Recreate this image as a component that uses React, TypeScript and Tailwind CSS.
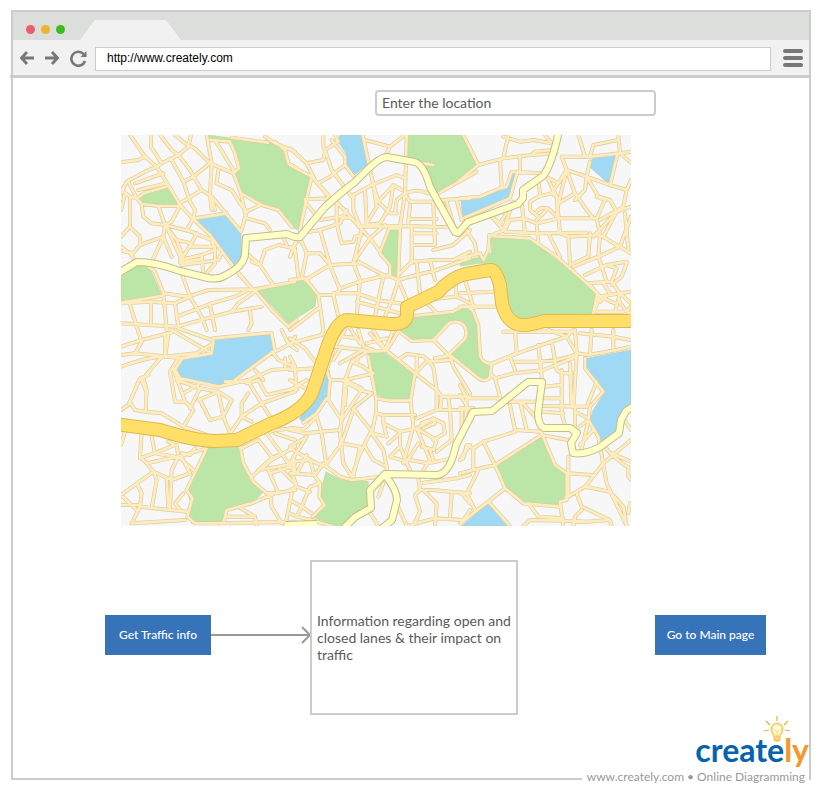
import React from "react";

type Tile = { x: number; y: number; roads: string; green: string; water: string };

// The city is drawn as tiles; each tile uses three units for one pixel.
const tiles: Tile[] = [
  {
    x: -6,
    y: -5,
    green:
      "M280,15L350,25L470,35L500,55L515,100L545,120L585,145L575,190L560,240L550,300L525,290L490,240L430,220L378,185L360,130L375,115L355,40L285,30Z M68,205L90,190L155,172L192,228L80,222Z M18,440L60,403L85,405L110,425L140,498L18,518Z M428,482L565,450L605,495L600,530L520,580Z",
    water: "M245,268L335,253L378,305L380,380L355,408L285,310Z",
    roads:
      "M45,15L90,80L125,110L160,165L195,225L235,268L285,315L355,410L410,475 M18,97L70,90L90,80 M108,15L108,50L140,100L190,75L220,50L228,15 M125,110L140,100 M135,15L170,60L190,75L225,120L260,180L290,200L335,253L378,305 M180,15L210,40L240,55L285,100L355,130 M275,15L290,100L285,195L290,240 M285,30L345,35L360,70L372,115L355,130 M300,30L355,120 M285,100L235,140L205,155 M170,90L205,155L225,215L240,240L235,268 M125,110L90,125L35,155L18,190 M60,160L145,130 M40,155L65,205 M70,180L155,160 M18,180L45,200L65,205L80,222L130,228L195,228 M65,205L90,188L155,170 M45,205L45,290L18,320 M45,290L75,320L75,345L50,375L18,350 M50,375L60,395 M18,363L50,368 M75,345L145,320L150,285 M80,225L85,260L110,280L150,285L210,300L245,310 M130,228L150,285 M195,228L170,275L150,285L185,330L230,340L245,310 M145,320L170,380 M145,320L115,385 M185,330L205,385 M155,290L200,390 M230,340L200,385 M215,300L235,265 M195,220L260,180 M310,120L305,160L350,180L375,220L395,245L380,300 M395,245L435,225 M355,130L378,190L440,225L490,240L530,290 M378,190L390,250 M395,265L450,280L465,300 M240,265L335,250 M290,200L300,240 M195,390L260,375L300,360L290,330L240,310 M200,405L310,390L320,370 M195,398L255,388 M260,380L265,430 M300,350L300,400L275,430 M230,350L290,350 M95,405L120,425L145,490L220,500L280,480L420,478L540,455 M200,430L225,500L260,560L275,600 M145,490L155,600 M108,520L108,580 M18,520L105,515L180,520L225,500 M45,525L65,590 M18,580L185,590L350,545L440,530 M180,520L190,590 M185,560L290,520L360,500L400,480 M350,545L370,520L420,485 M420,480L470,540L520,590 M405,545L410,580L400,600 M285,525L300,600 M18,518L140,498 M410,395L435,405L450,360L490,345L540,355 M435,405L475,465 M370,430L410,475 M395,370L435,405 M450,20L480,40L540,65 M350,23L460,38 M480,35L510,60L520,100L545,115 M515,345L500,310 M18,240L30,190L18,175 M520,590L545,570",
  },
  {
    x: 169,
    y: -5,
    green:
      "M355,15L520,15L562,105L510,145L440,188L400,100L352,80Z M300,295L328,295L318,440L300,438L298,400L275,365Z",
    water: "M150,15L218,15L235,100L190,138L162,112L168,70L145,35Z",
    roads:
      "M0,55L50,100L75,150L115,195 M100,15L100,50L105,60L100,90L50,100 M135,15L145,35L105,60L125,120L185,200 M125,30L165,80L165,105L120,140L85,160 M165,105L190,138 M218,15L250,165L265,215L300,250L320,250 M225,30L300,50L345,15 M300,50L290,70 M350,15L345,190L330,290 M0,105L65,140L50,205L30,300 M65,140L120,205L45,208 M45,215L90,270 M245,165L320,135L345,145 M190,195L245,165 M190,195L190,240L215,300L190,400 M265,215L310,165L335,180 M310,165L300,230L270,280L230,285 M225,180L230,285 M250,165L260,230L230,280 M345,190Q380,175 415,190 M345,190L360,215L425,215 M315,250L320,210L345,190 M360,225L355,280 M355,267L440,267 M205,290L350,288L490,292 M365,288L365,400 M430,220L435,345 M365,310L440,310 M370,345L430,345 M430,360L490,345L540,300 M140,215L185,265L240,325 M270,370L300,405L300,435 M205,395L290,440 M210,400L120,405 M240,325L270,365 M195,390L240,325L285,285 M300,290L270,365 M330,290L325,440 M140,215L140,280L155,340L190,335L195,320L215,315 M90,270L150,260L185,265 M90,300L150,280L170,240 M30,310L90,300L120,405 M20,330L0,380 M15,360L25,440 M20,330L35,335L50,370L35,445 M50,370L90,370L120,405L45,450 M0,450L45,445L85,495L100,600 M120,405L150,480L130,495L85,495 M190,400L210,450L200,560 M150,475L210,455L290,435L325,450L380,435L440,420L540,385 M130,495L145,560 M130,490L200,490L260,510L330,520 M200,515L330,550 M280,440L265,510L255,560 M325,450L310,500L285,560 M325,450L350,510 M325,435L365,395L430,390L490,390L540,365 M380,400L390,490 M420,390L435,450 M0,600L85,535 M370,558L490,545L520,528 M495,450L500,500L540,520 M410,510L495,500 M410,520L440,548 M300,295L328,295 M445,190L560,125 M455,210L540,205 M470,215L495,300 M500,210L515,270 M455,215L480,260 M400,100L430,105",
  },
  {
    x: 339,
    y: -5,
    green:
      "M92,318L210,328L375,455L412,490L400,552L240,555L180,568L150,565L140,470L110,405L60,400L0,408L0,395L60,380L75,385L95,365Z",
    water:
      "M3,208L80,195L120,180L145,165L155,125L172,122L150,205L80,235L8,265Z M390,95L400,83L472,72L450,165L388,110Z",
    roads:
      "M10,15L55,105L0,150 M55,105L130,85L215,75L290,70 M145,15L130,85 M130,20L180,35L220,30L275,40L255,15 M215,75L225,65L280,60 M120,90L125,175L140,170L155,125L240,130 M180,85L180,130 M0,205L60,200L120,175 M172,125L150,205L80,235L10,265 M240,130L295,160L320,120L305,80L390,80L480,70L513,65 M355,15L375,80 M390,80L400,45L475,30 M475,15L480,70L515,100 M320,120L380,140L390,95 M380,140L450,165L472,75 M380,140L415,200L450,210L470,245L400,320 M450,165L500,180L513,150 M500,180L490,230L420,270 M320,120L345,190L295,220L290,265 M320,120L275,190L235,200L210,215L210,240L235,260 M295,220L320,120 M345,190L380,240L400,265 M345,210L375,180L380,140 M410,200L435,210L410,265 M230,245Q245,225 270,240L295,265 M150,270L190,265L230,280L295,265L410,265 M95,315L135,300L150,270 M230,270L265,235 M185,215L195,310 M80,250L120,280L150,230 M95,260L130,300L160,215 M135,305L230,310L380,308 M230,280L235,340 M265,310L300,380 M290,200L300,310L325,320L330,400 M325,320L420,315L470,345L513,370 M390,310L385,380L330,405 M410,265L420,315L415,380L440,455 M92,318L210,325L290,380L375,455L412,490L400,550 M415,380L340,410 M415,380L480,350L513,260 M470,245L430,320 M470,245L513,230 M375,435L440,405L500,395 M440,405L470,415L455,455L380,460 M455,455L480,490L513,485 M385,460L420,500L480,490L465,545 M400,550L420,500L465,520 M480,490L513,520 M500,400L485,440L455,465 M430,460L450,490L420,515 M495,250L505,360 M475,510L500,545L513,530 M410,545L490,545 M235,150L240,190 M265,150L290,200L275,190 M15,295L45,340L50,380 M0,385L60,370L70,390L85,360L88,315 M15,450L40,530L105,530 M0,490L105,485 M0,530L40,530",
  },
  {
    x: -6,
    y: 195,
    green:
      "M275,355L370,350L385,400L415,455L445,487L410,520L335,540L320,578L230,580L217,560L232,530L215,480Z",
    water: "M180,118L203,88L290,75L292,30L470,10L475,65L360,150L310,165L195,145Z",
    roads:
      "M18,50L80,30L180,5 M65,-10L80,35L60,70L140,78L200,85L290,70L295,25L470,8 M150,15L150,80 M160,15L150,80 M18,75L60,70 M18,110L80,90L140,78 M140,80L85,145L95,180L92,245L140,250L205,290L275,315 M100,135L75,145L40,225L18,240 M45,215L60,240L92,245 M78,145L95,190 M150,80L245,70L295,40 M170,0L290,70 M190,-5L290,30 M200,88L180,118L195,145 M190,85L165,125L180,215L210,215L175,115 M210,215L235,240L205,290 M185,150L255,175L225,235 M205,190L250,165 M255,175L310,185L350,210L325,260L345,310 M250,210L310,185 M255,210L285,270L325,260 M310,185L325,260 M195,145L310,170L400,150L470,120L540,115 M360,150L475,65 M330,155L400,155 M400,155L440,220L465,260 M395,160L430,150L455,195L540,175 M440,220L380,260L345,310 M400,190L380,220L380,260L410,275 M440,220L540,185 M475,70L490,90L540,110 M510,85L510,110 M470,10L480,65L530,40L540,20 M500,0L520,40L545,60 M420,120L445,150 M540,115L545,180 M80,310L75,380L95,400L115,425L18,495L65,540 M18,345L30,305 M110,320L120,370L180,380 M75,385L130,365L180,345L160,335 M185,345L190,380L170,420L165,540 M95,400L190,380L235,420 M190,380L275,355 M200,370L225,375L240,355 M200,380L225,430 M115,425L170,450L225,430 M65,460L80,490L75,530L50,580 M75,530L165,540L215,545 M115,425L125,450L110,535 M160,530L155,450 M50,580L130,575L210,570 M205,490L180,520L195,540 M275,355L215,480L232,505L217,560L240,580L320,580 M18,525L75,525 M375,345L385,400L415,455L455,490L480,490L540,480 M380,355L430,330L470,380 M470,385L430,420 M410,440L470,390L540,350 M430,420L490,410L540,400 M460,420L490,490 M455,310L500,370L540,430 M480,310L540,330 M450,310L480,300L540,295 M490,410L540,460 M480,490L410,520L335,540L325,580 M465,490L470,530L500,580 M530,490L510,590 M500,370L470,385 M465,430L530,410 M370,530L420,560L425,585 M330,560L420,560 M320,580L540,575",
  },
  {
    x: 169,
    y: 195,
    green:
      "M232,65L280,65L373,135L362,205L300,210L258,195Z M108,425L150,448L235,455L232,490L238,530L150,588L130,588L68,560L103,525L88,500Z",
    water: "M110,122L118,122L108,210L80,250L40,278L28,265L80,205Z",
    roads:
      "M0,25L45,55L75,95 M100,0L95,15L0,40 M0,120L75,115 M0,80L15,110 M0,180L50,150 M0,150L55,180 M130,60L110,120L120,150L115,210L155,270 M110,205L80,250L40,278 M165,0L135,50L220,60 M130,15L200,25 M150,100L220,60L232,65L290,62L375,130L440,180 M165,150L185,95L220,110L240,125 M185,95L232,65 M205,80L200,100 M120,150L165,150L250,130 M165,150L155,270L150,320 M155,150L210,180L245,190 M130,90L155,50 M170,150L165,225 M215,180L155,270 M245,190L190,235L250,310 M215,175L165,150 M205,0L220,50L250,60 M240,10L285,60L310,0 M230,40L290,25 M250,0L280,50 M170,-20L210,40 M235,80L258,205L300,212L362,212 M258,205L258,250L280,255L375,255 M258,250L245,310L280,360L290,410 M375,130L362,212L370,290L340,400 M280,255L280,280L330,305L380,295 M280,280L290,320L245,310 M330,305L330,350L350,395L385,340 M330,350L300,380L350,395 M330,310L295,340 M380,295L440,330L430,360L395,350 M380,295L420,390L400,420 M380,295L430,265L460,280L465,310L430,330 M395,280Q430,260 435,280L400,295 M330,85L350,72L400,78L430,110L440,180L440,240 M380,75L380,130 M400,78L420,95L480,90 M375,130L410,95 M480,78L490,110L540,190 M290,62L325,4 M440,180L455,200L540,200 M440,240L380,265 M440,240L540,240 M455,200L450,240 M475,200L480,240L485,330L440,365 M515,240L515,300 M40,310L150,300L155,270 M0,295L40,298L80,260L95,310L110,410 M0,350L50,320L0,400 M50,310L0,300 M0,355L80,400L110,410 M150,310L160,400L185,440 M150,340L210,350L190,440 M155,340L110,400 M240,310L210,370L185,440 M225,350L250,390L290,410L290,430 M190,240L155,340 M110,410L150,440L185,450L270,440 M0,430L75,435L100,400 M0,395L60,390L75,440 M10,380L15,430 M50,375L20,430 M75,440L90,460L60,470L35,530L65,550 M90,460L88,500L103,525L68,560 M0,480L20,470L60,485 M0,510L35,530L20,560L0,550 M20,560L65,570L130,590 M10,440L20,470 M345,390L360,420 M360,390L415,400L485,385 M420,360L430,390 M385,445L390,480L375,495L390,545L370,588 M390,460L500,445L540,435 M390,480L430,480L480,485L540,490 M400,480L440,520L435,588 M485,490L480,560 M435,565L520,570L540,540 M235,540L265,588 M320,520L350,588L435,565 M265,500L280,460 M515,490L540,520 M540,345L515,380",
  },
  {
    x: 339,
    y: 195,
    green: "M108,408L245,322L285,410L317,432L317,490L298,530L185,518L135,475Z",
    water:
      "M380,85L513,60L513,225L480,260L475,310L425,340L412,315L388,270L400,240L435,185L378,115Z M5,588L85,520L148,588Z",
    roads:
      "M165,0L170,70 M150,80L165,120 M95,100L200,60L320,20L340,0 M95,135L105,145L160,130L250,120L350,80 M235,45L245,140 M165,95L240,95L290,90L345,75 M275,35L290,120L305,130 M265,0L320,20L350,70L345,0 M350,70L385,75L470,60L513,50 M395,0L390,70 M360,10L460,20L513,30 M130,5L340,5 M460,0L460,55 M105,145L120,200 M20,205L120,205 M0,165L20,205L15,300 M0,195L25,235 M0,235L40,235 M350,75L340,230 M305,120L305,250L315,285 M255,170L300,165 M255,205L300,205 M250,228L380,230 M250,245L310,250 M335,130L305,130 M330,100L335,230 M375,85L375,115L430,185L390,230L385,270L345,300 M410,155L380,230 M345,245L385,265 M345,230L345,300 M385,270L415,320L440,460L500,588 M385,275L365,355 M400,300L360,345 M150,225L165,300L245,305 M180,215L200,300 M120,215L240,215 M185,215L225,260 M165,305L70,335L105,405L245,315 M245,315L325,330 M70,335L40,355L40,420L0,430 M40,420L105,405L135,475L190,520L300,530 M40,355L20,345L10,385L0,390 M55,420L20,490L45,540 M0,490L20,490 M0,580L85,515L135,475 M85,515L150,588 M245,310L285,405L320,430L320,510L300,515L310,588 M325,380L325,500L375,470L430,400L513,330 M325,430L395,435 M375,470L450,485L490,530L500,588 M350,490L365,530L450,570L455,588 M430,345L455,375L500,410 M455,370L513,395 M490,265L513,300 M340,588L345,560L365,540 M205,520L235,560L310,565 M190,588L210,570L310,572L380,575L450,570 M505,410L505,440L513,450 M510,520L505,550",
  },
  {
    x: 249,
    y: 165,
    green:
      "M88,92L130,50L250,40L270,25L300,30L320,65L325,160L340,190L360,200L355,235L335,240L240,165L290,115L290,80L265,62L240,65L190,118L125,122Z",
    water: "",
    roads:
      "M85,93L125,123L190,120L238,69Q262,60 280,74Q298,95 282,120L237,163L322,232Q345,250 360,232L365,192L440,160 M190,120L237,167L195,175 M365,192Q335,190 330,165L325,75L310,35L300,25L330,20",
  },
];

const minorHighways =
  "M115,275L137,262Q155,262 180,271L208,278Q218,280 226,275Q244,266 245,254L246,238L287,234Q295,238 300,237L324,208Q340,193 355,182L366,171Q380,157 387,157L415,162Q424,165 430,187L455,232L458,233L468,222L518,204L523,198L523,190L543,176Q552,165 559,130 M640,402L626,411L621,420L619,433L600,447Q585,455 573,453L571,443L577,433L570,428L544,428Q538,425 538,413L542,382L528,382L492,411L473,412L456,445Q450,474 437,475L385,474L370,490L371,508L355,517L342,530 M385,475Q397,490 397,500L392,520L380,530 M285,525L317,524";
const highway =
  "M115,424L160,430Q195,441 215,441L237,440L270,424Q303,412 312,393L328,345Q337,321 347,320L390,324Q408,325 407,313L407,307L438,292Q452,277 466,274L490,270Q496,269 500,285L502,303Q508,330 532,324L545,321L640,321";

function CityMap() {
  return (
    <svg
      viewBox="0 0 510 391"
      role="img"
      aria-label="City map"
      className="block h-auto w-full max-w-[510px] bg-[#f7f7f7]"
      fill="none"
      strokeLinejoin="round"
    >
      {tiles.map((t, i) => (
        <g key={i} transform={`translate(${t.x} ${t.y}) scale(0.33333)`}>
          <path d={t.green} fill="#bbe6a7" stroke="#ccd39a" strokeWidth={2} />
          <path d={t.water} fill="#a0d9f4" stroke="#bccbb8" strokeWidth={2} />
        </g>
      ))}
      {tiles.map((t, i) => (
        <path
          key={i}
          d={t.roads}
          transform={`translate(${t.x} ${t.y}) scale(0.33333)`}
          stroke="#d9cca4"
          strokeWidth={12}
          strokeLinecap="round"
        />
      ))}
      {tiles.map((t, i) => (
        <path
          key={i}
          d={t.roads}
          transform={`translate(${t.x} ${t.y}) scale(0.33333)`}
          stroke="#ffecbd"
          strokeWidth={8}
          strokeLinecap="round"
        />
      ))}
      <g transform="translate(-121 -135)">
        <path d={minorHighways} stroke="#c5bd88" strokeWidth={8} />
        <path d={minorHighways} stroke="#ffffc8" strokeWidth={6} />
        <path d={highway} stroke="#dfb94d" strokeWidth={14} />
        <path d={highway} stroke="#ffdf68" strokeWidth={12} />
        <path d="M631,300v20" stroke="#ffdf68" strokeWidth={2} />
      </g>
    </svg>
  );
}

function Logo() {
  return (
    <div className="absolute right-0 -bottom-[7px] flex flex-col items-end bg-white">
      <div className="relative h-[46px] w-[116px]">
        <svg
          viewBox="0 0 28 27"
          className="absolute -top-[7px] right-[18px] h-[27px] w-[28px]"
          fill="none"
          aria-hidden="true"
        >
          <path
            d="M14 0v5M3 5l4 4M25 5l-4 4M1 15l5-1M27 15l-5-1"
            stroke="#f3a83b"
            strokeWidth="1.200"
          />
          <path
            d="M11 24v-3c0-2-3-4-3-8a6 6 0 0 1 12 0c0 4-3 6-3 8v3q-3 3-6 0Z"
            fill="#ffe27a"
            stroke="#efc165"
            strokeWidth="1"
          />
          <path d="M10 13a4 4 0 0 1 8 0q0 3-2 6h-4q-2-3-2-6Z" fill="#fffbe0" />
          <path d="M12 14l2 2l2-2M14 16v4" stroke="#f6cf70" strokeWidth="0.800" />
          <path d="M11 21h6M11 24h6" stroke="#f0b850" strokeWidth="0.800" />
        </svg>
        <p className="absolute right-0 bottom-0 font-['Lato',sans-serif] text-[32px] leading-[38px] font-bold text-[#0863ae]">
          create<span className="text-[#f7962c]">ly</span>
        </p>
      </div>
      <p className="pr-[4px] pl-[5px] font-['Lato',sans-serif] text-[12px] leading-[16px] whitespace-nowrap text-[#999]">
        www.creately.com • Online Diagramming
      </p>
    </div>
  );
}

const navButton = "flex h-[20px] w-[20px] items-center justify-center";

export default function App() {
  return (
    <div className="min-h-screen bg-white pt-[10px] pr-[9px] pb-[10px] pl-[11px] font-['Lato',sans-serif]">
      <div className="relative border-2 border-[#ccc]">
        <header>
          <div className="flex h-[28px] items-end bg-[#dcdedb]">
            <div className="mb-[6px] ml-[13px] flex gap-[6px]">
              <span className="h-[9px] w-[9px] rounded-full bg-[#eb5e6b]" />
              <span className="h-[9px] w-[9px] rounded-full bg-[#edb52f]" />
              <span className="h-[9px] w-[9px] rounded-full bg-[#3bbd20]" />
            </div>
            <div className="ml-[15px] h-[20px] w-[101px] bg-[#f1f1f1] [clip-path:polygon(15px_0,86px_0,100%_100%,0_100%)]" />
          </div>
          <div className="flex h-[35px] items-center bg-[#f1f1f1] pr-[6px] pl-[4px]">
            <button type="button" aria-label="Back" className={navButton}>
              <svg viewBox="0 0 14 14" className="h-[14px] w-[14px]" fill="none">
                <path d="M14 7H2M7 1L1.500 7L7 13" stroke="#777" strokeWidth="2.800" />
              </svg>
            </button>
            <button type="button" aria-label="Forward" className={`${navButton} ml-[5px]`}>
              <svg viewBox="0 0 14 14" className="h-[14px] w-[14px]" fill="none">
                <path d="M0 7h12M7 1l5.500 6L7 13" stroke="#777" strokeWidth="2.800" />
              </svg>
            </button>
            <button type="button" aria-label="Reload" className={`${navButton} ml-[6px]`}>
              <svg viewBox="0 0 18 18" className="h-[18px] w-[18px]" fill="none">
                <path d="M14.500 5A7 7 0 1 0 16 12" stroke="#777" strokeWidth="2.600" />
                <path d="M17.500 2v6h-6Z" fill="#777" />
              </svg>
            </button>
            <input
              type="text"
              aria-label="Address"
              defaultValue="http://www.creately.com"
              className="mt-[3px] ml-[7px] h-[24px] min-w-0 flex-1 border border-[#ccc] bg-white px-[11px] pb-[2px] font-['Liberation_Sans',Arial,sans-serif] text-[12px] text-black outline-none"
            />
            <button
              type="button"
              aria-label="Menu"
              className="ml-[12px] flex w-[20px] flex-col gap-[3px]"
            >
              <span className="h-[4px] rounded-full bg-[#777]" />
              <span className="h-[4px] rounded-full bg-[#777]" />
              <span className="h-[4px] rounded-full bg-[#777]" />
            </button>
          </div>
          <div className="-ml-[3px] h-[3px] bg-[#ccc]" />
        </header>
        <main className="pt-[12px] pb-[63px]">
          <input
            type="text"
            aria-label="Enter the location"
            defaultValue="Enter the location"
            className="ml-[362px] block h-[26px] w-[281px] rounded-[4px] border-2 border-[#ccc] bg-white px-[5px] pb-[2px] text-[14px] text-[#5a5a5a] outline-none"
          />
          <div className="mt-[19px] ml-[108px]">
            <CityMap />
          </div>
          <div className="mt-[34px] flex items-center pr-[43px] pl-[92px]">
            <button
              type="button"
              className="mb-[5px] h-[40px] w-[106px] shrink-0 bg-[#3773b8] text-[12px] font-medium text-white"
            >
              Get Traffic info
            </button>
            <svg
              viewBox="0 0 100 18"
              className="-mr-px mb-[5px] h-[18px] w-[100px] shrink-0"
              fill="none"
              aria-hidden="true"
            >
              <path d="M0 9h99M91 1l8 8l-8 8" stroke="#999" strokeWidth="2" />
            </svg>
            <p className="flex h-[155px] w-[208px] shrink-0 items-center border-2 border-[#ccc] pr-[2px] pl-[5px] text-[14px] leading-[17px] text-[#5a5a5a]">
              Information regarding open and closed lanes &amp; their impact on traffic
            </p>
            <button
              type="button"
              className="mb-[5px] ml-auto h-[40px] w-[111px] shrink-0 bg-[#3773b8] text-[12px] font-medium text-white"
            >
              Go to Main page
            </button>
          </div>
        </main>
        <Logo />
      </div>
    </div>
  );
}
